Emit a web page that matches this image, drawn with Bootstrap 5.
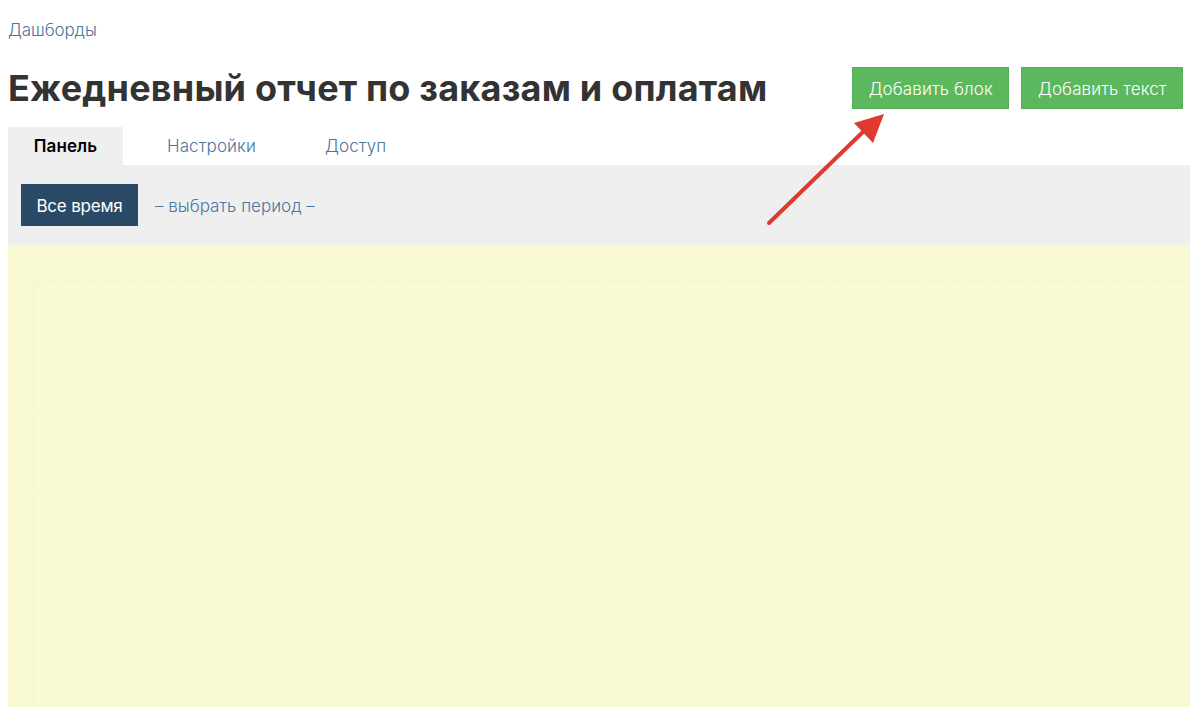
<!DOCTYPE html>
<html lang="ru">
<head>
    <meta charset="UTF-8">
    <meta name="viewport" content="width=device-width, initial-scale=1.0">
    <title>Ежедневный отчет по заказам и оплатам</title>
    <link href="https://cdn.jsdelivr.net/npm/bootstrap@5.3.0/dist/css/bootstrap.min.css" rel="stylesheet">
    <style>
        html, body {
            height: 100%;
            overflow: hidden;
        }
        body {
            font-family: Inter, "Noto Sans", sans-serif;
            font-size: 17px;
            background: #fff;
            padding-left: 8px;
            position: relative;
        }
        a {
            color: #4a76a0;
            text-decoration: none;
        }
        .crumbs {
            padding-top: 19px;
            height: 59px;
            line-height: 22px;
            letter-spacing: -.1px;
            font-weight: 300;
        }
        .page-head {
            height: 68px;
            padding-right: 7px;
        }
        .page-title {
            color: #333;
            font-size: 36px;
            font-weight: 700;
            margin: 0;
            padding-bottom: 8px;
            letter-spacing: .2px;
        }
        .btn-add {
            background: #5cb85c;
            color: #fff;
            border-radius: 0;
            border: 1px solid #55ad55;
            height: 42px;
            font-size: 17px;
            font-weight: 300;
            letter-spacing: .1px;
            padding: 3px 15.5px 0;
            margin-bottom: 10px;
        }
        .tab-row a, .tab-row span {
            display: block;
            height: 38px;
            line-height: 38px;
            font-weight: 300;
            letter-spacing: .1px;
        }
        .tab-row .tab-on {
            width: 115px;
            background: #efeff0;
            color: #000;
            font-weight: 600;
            text-align: center;
        }
        .tab-one { margin-left: 44px; }
        .tab-two { margin-left: 69px; }
        .period-bar {
            background: #efeff0;
            height: 80px;
            padding-left: 13px;
        }
        .btn-period {
            background: #2b4a68;
            color: #fff;
            border-radius: 0;
            height: 42px;
            width: 117px;
            padding: 3px 0 0;
            font-size: 17px;
            font-weight: 400;
            letter-spacing: -.2px;
        }
        .period-link {
            margin-left: 17px;
            padding-top: 3px;
            font-weight: 300;
        }
        .canvas-area {
            background: #f9f9d2;
            height: 462px;
            padding: 36px 0 0 25px;
        }
        .canvas-grid {
            height: 100%;
            border-left: 1px dashed #efefc8;
            border-top: 1px dashed #efefc8;
        }
        .red-arrow {
            position: absolute;
            left: 760px;
            top: 105px;
        }
    </style>
</head>
<body>
    <div class="crumbs"><a href="#">Дашборды</a></div>
    <div class="page-head d-flex justify-content-between align-items-center">
        <h1 class="page-title">Ежедневный отчет по заказам и оплатам</h1>
        <div class="d-flex gap-2">
            <button class="btn btn-add" type="button">Добавить блок</button>
            <button class="btn btn-add ms-1" type="button">Добавить текст</button>
        </div>
    </div>
    <div class="tab-row d-flex">
        <span class="tab-on">Панель</span>
        <a class="tab-one" href="#">Настройки</a>
        <a class="tab-two" href="#">Доступ</a>
    </div>
    <div class="period-bar d-flex align-items-center">
        <button class="btn btn-period" type="button">Все время</button>
        <a class="period-link" href="#">– выбрать период –</a>
    </div>
    <div class="canvas-area">
        <div class="canvas-grid"></div>
    </div>
    <svg class="red-arrow" width="130" height="125" viewBox="0 0 130 125">
        <line x1="9" y1="118" x2="106" y2="24" stroke="#e0392f" stroke-width="4" stroke-linecap="round"/>
        <polygon points="124,9 94,18 113,38" fill="#e0392f"/>
    </svg>
</body>
</html>
